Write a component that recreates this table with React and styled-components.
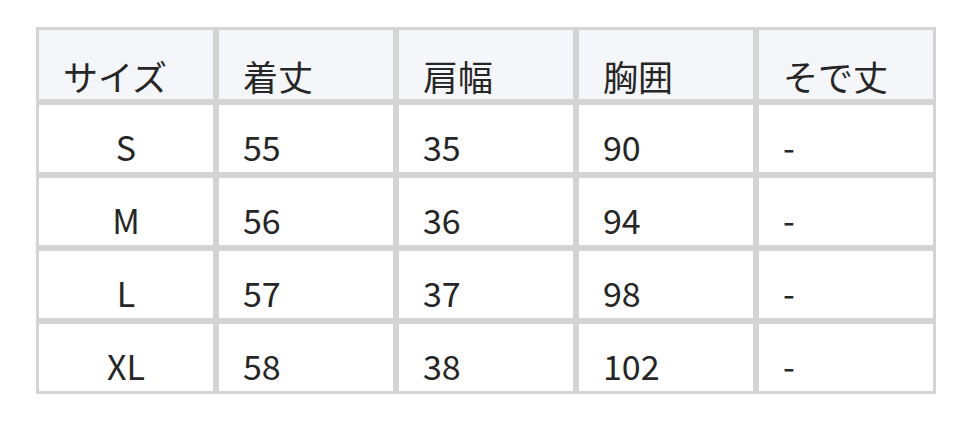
import React from "react";
import styled, { createGlobalStyle } from "styled-components";

const GlobalStyle = createGlobalStyle`
  body {
    margin: 0;
    background: #ffffff;
    font-family: "Noto Sans CJK JP", "Noto Sans", sans-serif;
    color: #262626;
  }
`;

const Page = styled.div`
  padding: 27px 0 0 36px;
`;

const Table = styled.table`
  border-collapse: separate;
  border-spacing: 0;
  table-layout: fixed;
  width: 900px;
`;

const Head = styled.th`
  box-sizing: border-box;
  width: 180px;
  height: 75px;
  padding: 0 0 6px 24px;
  border: 3px solid #d4d4d4;
  background: #f5f6fa;
  font-size: 35px;
  font-weight: 400;
  line-height: 1;
  text-align: left;
  vertical-align: bottom;
`;

const Cell = styled.td`
  box-sizing: border-box;
  height: 73px;
  padding: 0 0 8px 24px;
  border: 3px solid #d4d4d4;
  font-size: 34px;
  line-height: 1;
  text-align: ${(p) => (p.$center ? "center" : "left")};
  padding-left: ${(p) => (p.$center ? "0" : "24px")};
  vertical-align: bottom;
`;

const columns = ["サイズ", "着丈", "肩幅", "胸囲", "そで丈"];

const rows = [
  ["S", "55", "35", "90", "-"],
  ["M", "56", "36", "94", "-"],
  ["L", "57", "37", "98", "-"],
  ["XL", "58", "38", "102", "-"],
];

export default function App() {
  return (
    <Page>
      <GlobalStyle />
      <Table>
        <thead>
          <tr>
            {columns.map((c) => (
              <Head key={c}>{c}</Head>
            ))}
          </tr>
        </thead>
        <tbody>
          {rows.map((r) => (
            <tr key={r[0]}>
              {r.map((v, i) => (
                <Cell key={i} $center={i === 0}>
                  {v}
                </Cell>
              ))}
            </tr>
          ))}
        </tbody>
      </Table>
    </Page>
  );
}
